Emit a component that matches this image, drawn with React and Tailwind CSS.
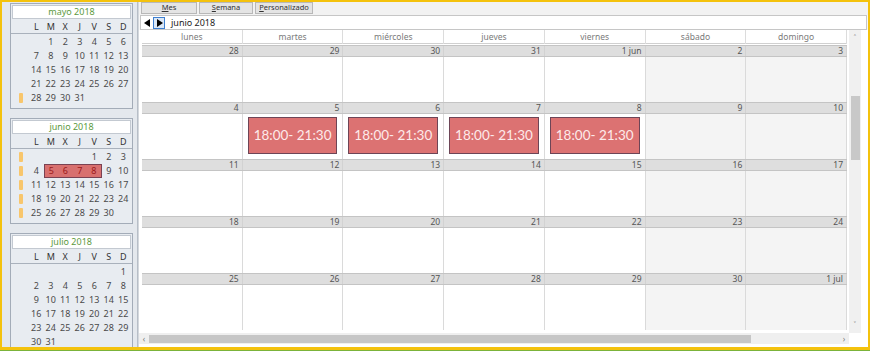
import React from 'react';

const font = { fontFamily: '"Noto Sans", "Open Sans", sans-serif' };

const dayLetters = ['L', 'M', 'X', 'J', 'V', 'S', 'D'];
const dayNames = ['lunes', 'martes', 'miércoles', 'jueves', 'viernes', 'sábado', 'domingo'];

const weeks = [
  { dates: ['28', '29', '30', '31', '1 jun', '2', '3'] },
  { dates: ['4', '5', '6', '7', '8', '9', '10'], events: [1, 2, 3, 4] },
  { dates: ['11', '12', '13', '14', '15', '16', '17'] },
  { dates: ['18', '19', '20', '21', '22', '23', '24'] },
  { dates: ['25', '26', '27', '28', '29', '30', '1 jul'] },
];

const MiniCal = ({ title, offset, days, marked = [], hi = [], rowCount }) => {
  const cells = [];
  for (let i = 0; i < offset; i++) cells.push(null);
  for (let d = 1; d <= days; d++) cells.push(d);
  while (cells.length < rowCount * 7) cells.push(null);
  const rows = [];
  for (let r = 0; r < rowCount; r++) rows.push(cells.slice(r * 7, r * 7 + 7));

  return (
    <div className="border border-[#a3acb8] bg-[#e8ecf1] pb-[3px]">
      <div className="m-[1px] h-[14px] bg-white border border-[#c3c9d1] flex items-center justify-center text-[9px] text-[#5c9a3e]">
        {title}
      </div>
      <div className="grid grid-cols-[18px_repeat(7,14.5px)] h-[14px] items-center border-b border-[#a9b1bc] text-[9px] text-[#333]">
        <div />
        {dayLetters.map((l) => (
          <div key={l} className="text-center">{l}</div>
        ))}
      </div>
      <div className="pt-[1px]">
        {rows.map((row, r) => (
          <div key={r} className="grid grid-cols-[18px_repeat(7,14.5px)] h-[14px] items-center text-[9px] text-[#4a4a4a]">
            <div className="flex justify-center pl-[2px]">
              {marked.includes(r) && <div className="w-[4px] h-[10px] rounded-[1px] bg-[#f8c66c]" />}
            </div>
            {row.map((d, c) => {
              const h = d && hi.includes(d);
              const first = h && d === hi[0];
              const last = h && d === hi[hi.length - 1];
              return (
                <div
                  key={c}
                  className={
                    'h-[14px] flex items-center justify-center ' +
                    (h
                      ? 'bg-[#d8706f] text-[#9c1a1a] border-y border-[#7a4252] ' +
                        (first ? 'border-l ' : '') +
                        (last ? 'border-r ' : '')
                      : '')
                  }
                >
                  {d}
                </div>
              );
            })}
          </div>
        ))}
      </div>
    </div>
  );
};

const Tri = ({ dir }) => (
  <svg width="7" height="8" viewBox="0 0 7 8">
    {dir === 'l' ? <path d="M6 0 L0 4 L6 8 Z" fill="#000" /> : <path d="M1 0 L7 4 L1 8 Z" fill="#000" />}
  </svg>
);

export default function App() {
  return (
    <div className="w-[870px] h-[351px] bg-[#7bb33a]" style={font}>
      <div className="h-[350px] border-2 border-b-[3px] border-[#f4c20d] bg-white flex overflow-hidden">
        {/* left panel */}
        <div className="w-[136px] shrink-0 bg-[#e4e8ed] border-r border-[#b7bec7] flex flex-col gap-[9px] pt-[1px] pl-[8px] pr-[4px] overflow-hidden">
          <MiniCal title="mayo 2018" offset={1} days={31} marked={[4]} rowCount={5} />
          <MiniCal title="junio 2018" offset={4} days={30} marked={[0, 1, 2, 3, 4]} hi={[5, 6, 7, 8]} rowCount={5} />
          <MiniCal title="julio 2018" offset={6} days={31} rowCount={6} />
        </div>

        {/* main area */}
        <div className="flex-1 flex flex-col bg-[#f7f7f7] border-l border-[#d4d8dd]">
          <div className="h-[13px] flex items-start gap-[2px] pl-[2px] bg-[#f2f2f2]">
            {[
              ['M', 'es', 'w-[56px]'],
              ['S', 'emana', 'w-[54px]'],
              ['P', 'ersonalizado', 'w-[58px]'],
            ].map(([a, b, w]) => (
              <div key={b} className={w + ' h-[12px] bg-[#e4e4e4] border border-[#b8b8b8] flex items-center justify-center text-[7.5px] text-[#333] leading-none'}>
                <span className="underline">{a}</span>
                {b}
              </div>
            ))}
          </div>
          <div className="h-[15px] mx-[1px] border border-[#c6c6c6] bg-white flex items-center gap-[2px] pl-[3px]">
            <Tri dir="l" />
            <div className="w-[12px] h-[12px] border border-[#3d7fd1] bg-[#dbe8f7] flex items-center justify-center">
              <Tri dir="r" />
            </div>
            <span className="ml-[4px] text-[9px] text-[#222]">junio 2018</span>
          </div>

          <div className="flex-1 flex bg-white">
            <div className="w-[710px] flex flex-col">
              <div className="flex-1 pl-[3px]">
                <div className="w-[705px] grid grid-cols-7 h-[14px] border-b border-[#d0d0d0] mb-[1px]">
                  {dayNames.map((n) => (
                    <div key={n} className="border-r border-[#dcdcdc] text-center text-[8.5px] leading-[14px] text-[#7a7a7a]">
                      {n}
                    </div>
                  ))}
                </div>
                {weeks.map((w, wi) => (
                  <div key={wi} className="w-[705px]">
                    <div className="grid grid-cols-7 h-[12px] bg-[#dedede] border-y border-[#c4c4c4]">
                      {w.dates.map((d, i) => (
                        <div key={i} className="border-r border-[#d2d2d2] text-right pr-[3px] text-[8.5px] leading-[10px] text-[#555]">
                          {d}
                        </div>
                      ))}
                    </div>
                    <div className="grid grid-cols-7 h-[45px]">
                      {w.dates.map((d, i) => (
                        <div key={i} className={'border-r border-[#dadada] pt-[3px] px-[5px] ' + (i >= 5 ? 'bg-[#f4f4f4]' : 'bg-white')}>
                          {w.events && w.events.includes(i) && (
                            <div
                              className="h-[37px] bg-[#dc7272] border border-[#6d4556] flex items-center justify-center text-[13.5px] text-[#fdeaea]"
                              style={{ fontFamily: 'Lato, "Open Sans", sans-serif' }}
                            >
                              18:00- 21:30
                            </div>
                          )}
                        </div>
                      ))}
                    </div>
                  </div>
                ))}
              </div>
              <div className="h-[11px] bg-[#efefef] flex items-center text-[#777] text-[8px] leading-none">
                <span className="w-[10px] text-center">‹</span>
                <div className="w-[602px] h-[8px] bg-[#c6c6c6]" />
                <span className="ml-auto w-[10px] text-center">›</span>
              </div>
            </div>
            <div className="w-[12px] bg-[#f0f0f0] flex flex-col items-center mb-[11px]">
              <span className="text-[8px] text-[#777] leading-[12px] mt-[2px]">˄</span>
              <div className="mt-[52px] w-[9px] h-[64px] bg-[#c8c8c8]" />
              <span className="mt-auto mb-[2px] text-[8px] text-[#777] leading-[12px]">˅</span>
            </div>
          </div>
          <div className="h-[3px] bg-white" />
        </div>
      </div>
    </div>
  );
}
